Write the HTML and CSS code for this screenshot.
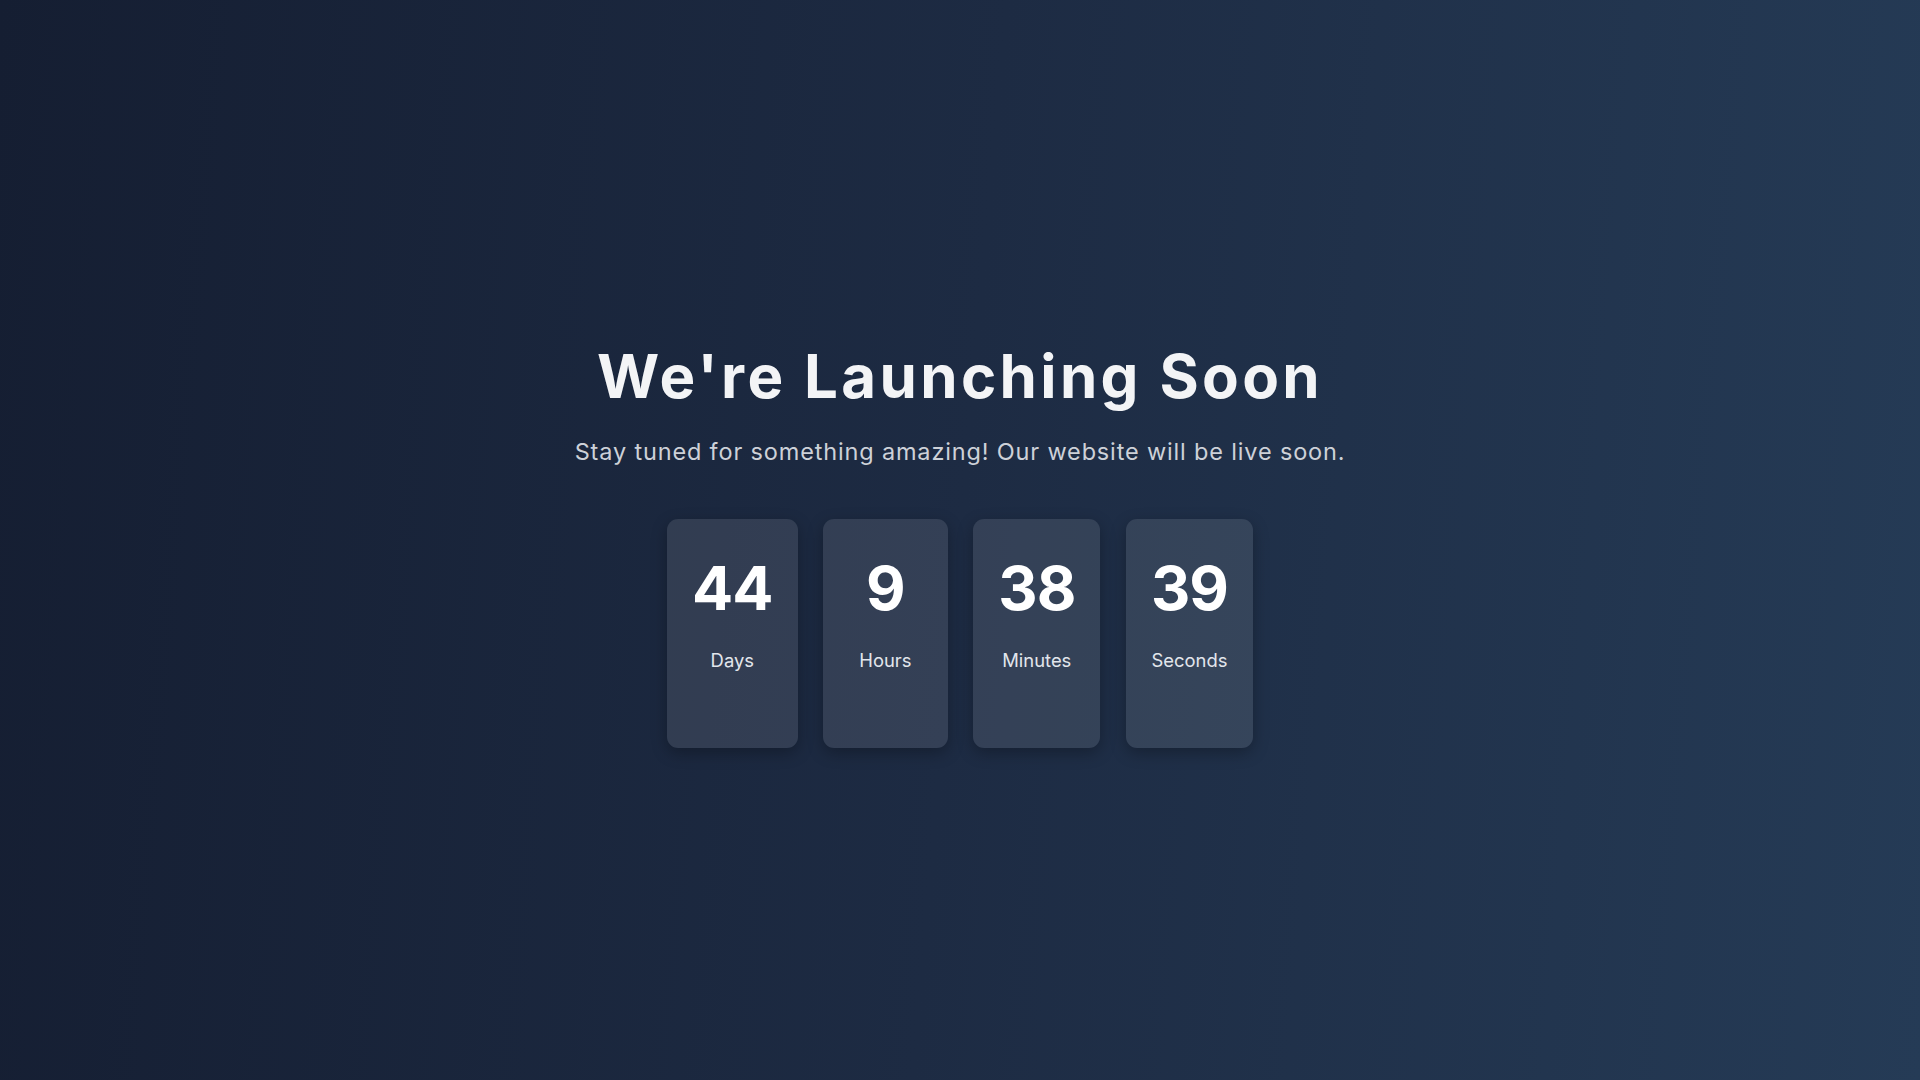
FILE: index.html
```html
<!DOCTYPE html>
<html lang="en">
<head>
<meta charset="utf-8">
<title>Coming Soon</title>
<link rel="stylesheet" href="styles.css">
</head>
<body>
<main class="page">
  <h1 class="title">We're Launching Soon</h1>
  <p class="subtitle">Stay tuned for something amazing! Our website will be live soon.</p>
  <div class="countdown">
    <div class="unit"><span class="value">44</span><span class="label">Days</span></div>
    <div class="unit"><span class="value">9</span><span class="label">Hours</span></div>
    <div class="unit"><span class="value">38</span><span class="label">Minutes</span></div>
    <div class="unit"><span class="value">39</span><span class="label">Seconds</span></div>
  </div>
</main>
</body>
</html>
```
FILE: styles.css
```css
* { box-sizing: border-box; }

html, body {
  margin: 0;
  padding: 0;
  height: 100%;
}

body {
  background: linear-gradient(95deg, #151e32 0%, #1d2b43 50%, #253b56 100%);
  font-family: "Inter", "Open Sans", sans-serif;
  color: #f3f4f6;
}

.page {
  min-height: 100vh;
  display: flex;
  flex-direction: column;
  align-items: center;
  justify-content: center;
  padding-top: 8px;
  text-align: center;
}

.title {
  margin: 0;
  font-size: 60px;
  line-height: 72px;
  font-weight: 650;
  letter-spacing: 3.35px;
  color: #f3f4f6;
}

.subtitle {
  margin: 22px 0 0;
  font-size: 23.5px;
  line-height: 35px;
  font-weight: 400;
  letter-spacing: 0.84px;
  color: #cdd1d8;
}

.countdown {
  margin-top: 50px;
  display: flex;
  gap: 25.6px;
}

.unit {
  min-width: 124.5px;
  height: 229.5px;
  padding: 33px 25px 0;
  border-radius: 11px;
  background: rgba(255, 255, 255, 0.1);
  box-shadow: 0 5px 16px rgba(0, 0, 0, 0.28);
  display: flex;
  flex-direction: column;
  align-items: center;
}

.value {
  font-size: 61px;
  line-height: 73px;
  font-weight: 700;
  letter-spacing: -1px;
  color: #ffffff;
}

.label {
  margin-top: 22.5px;
  font-size: 18.4px;
  line-height: 27.6px;
  font-weight: 400;
  color: #e2e6ec;
}
```
